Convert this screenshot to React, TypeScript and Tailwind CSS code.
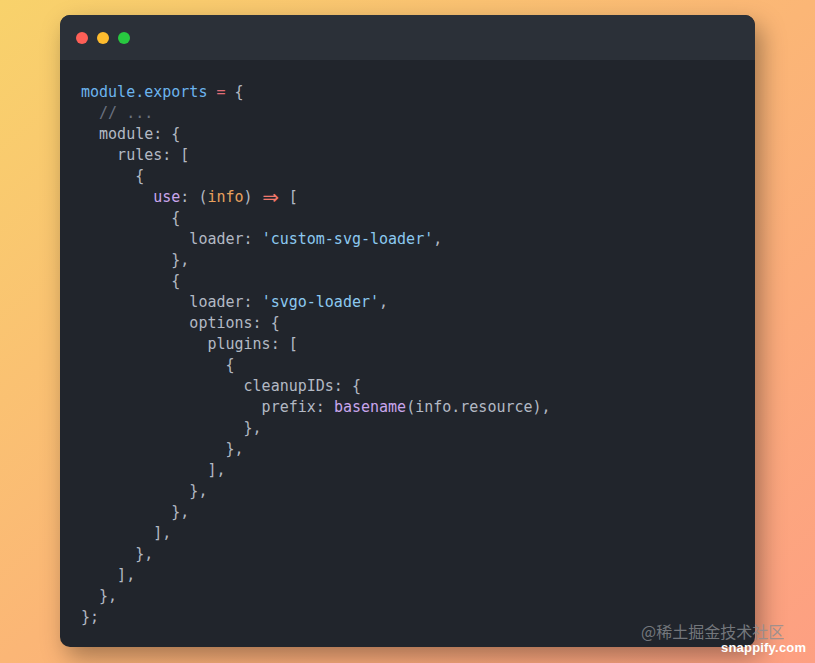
import React from "react";

type Tok = { t: string; c?: string };

const P = "text-[#b3b9c4]";
const BLUE = "text-[#6cb4ee]";
const STR = "text-[#8cc9f0]";
const RED = "text-[#e06c75]";
const PURPLE = "text-[#c9a6ec]";
const ORANGE = "text-[#e8a15e]";
const COMMENT = "text-[#6b7280]";

const lines: Tok[][] = [
    [{ t: "module.exports", c: BLUE }, { t: " " }, { t: "=", c: RED }, { t: " {" }],
    [{ t: "  " }, { t: "// ...", c: COMMENT }],
    [{ t: "  module: {" }],
    [{ t: "    rules: [" }],
    [{ t: "      {" }],
    [{ t: "        " }, { t: "use", c: PURPLE }, { t: ": (" }, { t: "info", c: ORANGE }, { t: ") " }, { t: "=>", c: "arrow" }, { t: " [" }],
    [{ t: "          {" }],
    [{ t: "            loader: " }, { t: "'custom-svg-loader'", c: STR }, { t: "," }],
    [{ t: "          }," }],
    [{ t: "          {" }],
    [{ t: "            loader: " }, { t: "'svgo-loader'", c: STR }, { t: "," }],
    [{ t: "            options: {" }],
    [{ t: "              plugins: [" }],
    [{ t: "                {" }],
    [{ t: "                  cleanupIDs: {" }],
    [{ t: "                    prefix: " }, { t: "basename", c: PURPLE }, { t: "(info.resource)," }],
    [{ t: "                  }," }],
    [{ t: "                }," }],
    [{ t: "              ]," }],
    [{ t: "            }," }],
    [{ t: "          }," }],
    [{ t: "        ]," }],
    [{ t: "      }," }],
    [{ t: "    ]," }],
    [{ t: "  }," }],
    [{ t: "};" }],
];

const App = () => {
    return (
        <div className="relative w-[815px] h-[663px] overflow-hidden bg-linear-to-br from-[#f8d26b] via-[#fbb676] to-[#fd9f82] pl-[60px] pt-[15px]">
            <div className="w-[695px] h-[632px] rounded-[10px] bg-[#21252c] shadow-[6px_10px_24px_rgba(0,0,0,0.35)] overflow-hidden">
                <div className="h-[45px] bg-[#2b3038] flex items-center gap-[9px] pl-[16px]">
                    <span className="w-[12px] h-[12px] rounded-full bg-[#fe5f57]" />
                    <span className="w-[12px] h-[12px] rounded-full bg-[#febc2e]" />
                    <span className="w-[12px] h-[12px] rounded-full bg-[#28c840]" />
                </div>
                <pre className={`pl-[21px] pt-[22px] text-[15px] leading-[21px] font-medium ${P}`} style={{ fontFamily: '"DejaVu Sans Mono", "Liberation Mono", monospace' }}>
                    {lines.map((line, i) => (
                        <div key={i} className="h-[21px] whitespace-pre">
                            {line.map((tok, j) =>
                                tok.c === "arrow" ? (
                                    <span key={j} className="inline-block w-[18px] text-center align-top text-[20px] leading-[21px] text-[#f0776b]" style={{ fontFamily: '"DejaVu Sans", sans-serif' }}>⇒</span>
                                ) : (
                                    <span key={j} className={tok.c}>{tok.t}</span>
                                )
                            )}
                        </div>
                    ))}
                </pre>
            </div>
            <div className="absolute left-[641px] top-[623px] text-[16px] leading-[16px] text-[#8a8d92]/80" style={{ fontFamily: '"Noto Sans CJK SC", "Noto Sans", sans-serif' }}>
                @稀土掘金技术社区
            </div>
            <div className="absolute left-[721px] top-[641px] text-[13px] leading-[13px] font-bold text-white tracking-[0.2px]" style={{ fontFamily: '"Liberation Sans", Arial, sans-serif' }}>
                snappify.com
            </div>
        </div>
    );
};

export default App;
